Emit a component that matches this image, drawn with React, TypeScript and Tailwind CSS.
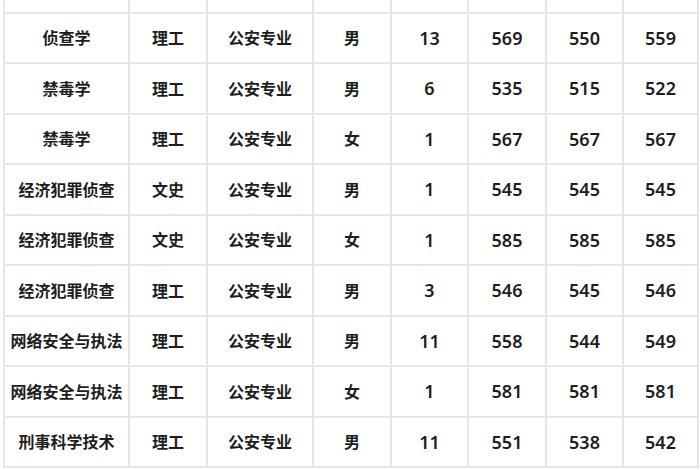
import React from "react";

const ROWS: string[][] = [
    ["治安学", "理工", "公安专业", "女", "2", "571", "566", "569"],
    ["侦查学", "理工", "公安专业", "男", "13", "569", "550", "559"],
    ["禁毒学", "理工", "公安专业", "男", "6", "535", "515", "522"],
    ["禁毒学", "理工", "公安专业", "女", "1", "567", "567", "567"],
    ["经济犯罪侦查", "文史", "公安专业", "男", "1", "545", "545", "545"],
    ["经济犯罪侦查", "文史", "公安专业", "女", "1", "585", "585", "585"],
    ["经济犯罪侦查", "理工", "公安专业", "男", "3", "546", "545", "546"],
    ["网络安全与执法", "理工", "公安专业", "男", "11", "558", "544", "549"],
    ["网络安全与执法", "理工", "公安专业", "女", "1", "581", "581", "581"],
    ["刑事科学技术", "理工", "公安专业", "男", "11", "551", "538", "542"],
];

export default function App() {
    return (
        <div className="w-[700px] h-[470px] overflow-hidden bg-white text-[#1e1e1e] font-['Noto_Sans','Noto_Sans_CJK_SC',sans-serif]">
            <div className="ml-[3px] -mt-[37px] w-[694px] grid grid-cols-[125px_78px_106px_78px_77px_78px_77px_75px] border-l-2 border-[#e6e6e6]">
                {ROWS.map((row, i) =>
                    row.map((cell, j) => (
                        <div
                            key={`${i}-${j}`}
                            className={
                                "flex items-center justify-center border-r-2 border-b-2 border-[#e6e6e6] font-semibold " +
                                (j >= 4 ? "text-[18px] " : "text-[16px] ") +
                                (i % 2 === 0 ? "h-[51px]" : "h-[50px]")
                            }
                        >
                            {cell}
                        </div>
                    ))
                )}
            </div>
        </div>
    );
}
